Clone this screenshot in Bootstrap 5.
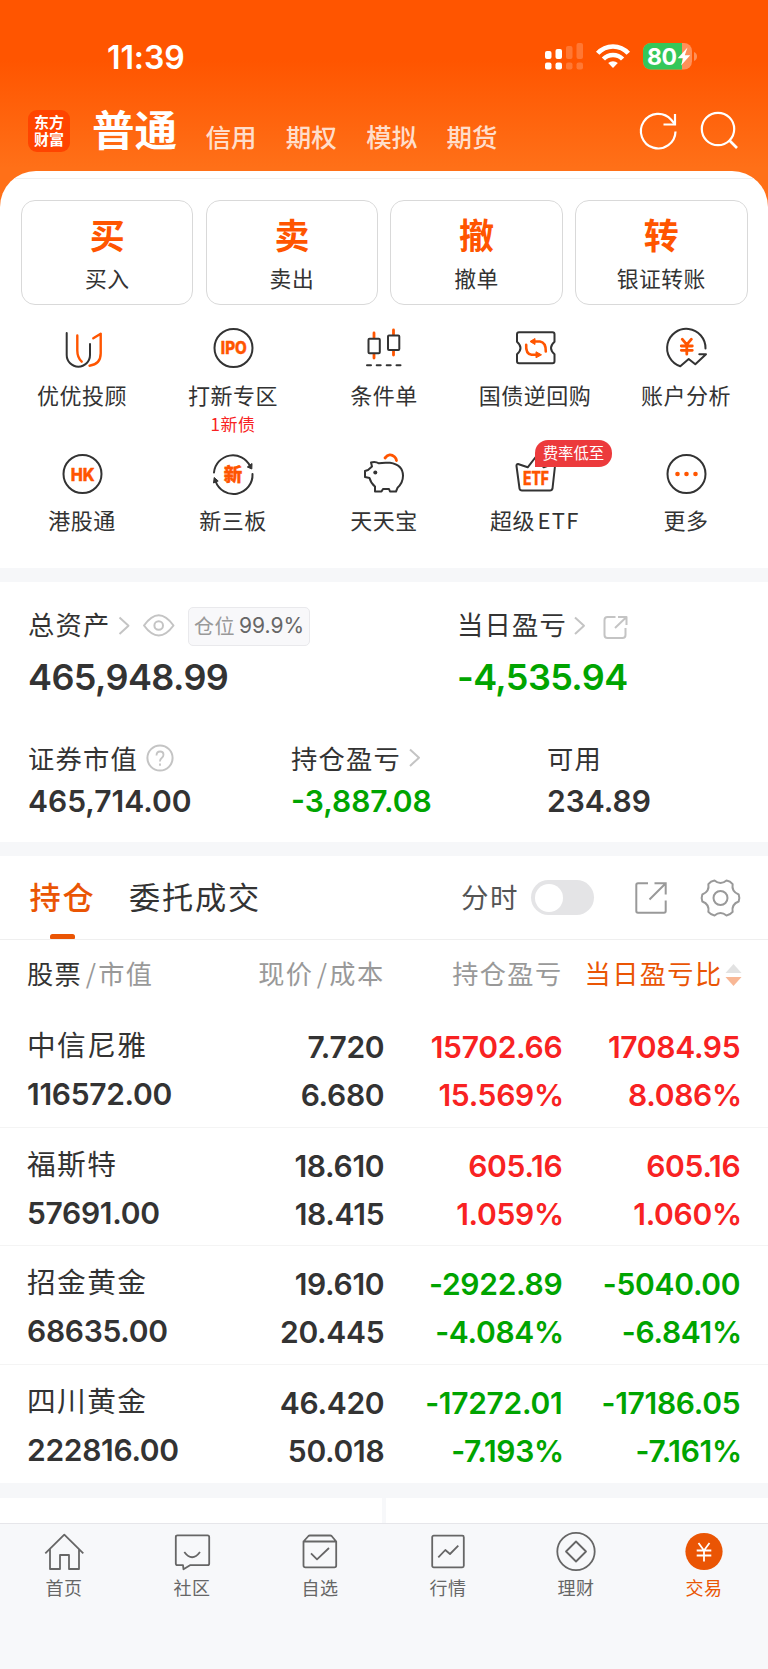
<!DOCTYPE html>
<html lang="zh-CN">
<head>
<meta charset="utf-8">
<meta name="viewport" content="width=device-width, initial-scale=1">
<title>交易</title>
<link href="https://cdn.jsdelivr.net/npm/bootstrap@5.3.0/dist/css/bootstrap.min.css" rel="stylesheet">
<style>
  :root { --ink:#333; --orange:#ff5500; --deep:#ea5504; --up:#f82222; --down:#00a400; --band:#f6f7f9; }
  body { font-family:"Noto Sans CJK SC",sans-serif; color:var(--ink); background:#f7f8fa; letter-spacing:.5px; }
  svg { display:block; overflow:visible; flex:none; }
  .num { font-family:Inter,"Noto Sans CJK SC",sans-serif; font-weight:600; letter-spacing:0; }
  .top-bg { background:linear-gradient(#ff5500 0,#ff5500 60px,#ff7018 168px,#ff7018 215px,#fff 215px); }
  .status { height:78px; padding:38px 71px 0 107px; color:#fff; }
  .clock { font-size:32px; line-height:40px; letter-spacing:-.1px; }
  .app-head { height:93px; padding:20px 29px 7px 28px; color:#fff; }
  .logo { width:42px; height:42px; border-radius:9px; background:#ff4400; font-size:15px; line-height:17px; font-weight:700; letter-spacing:0; padding-top:3px; }
  .title { font-size:42.5px; line-height:60px; font-weight:700; letter-spacing:0; margin-left:22px; padding-bottom:6px; }
  .modes { font-size:25.500px; font-weight:500; letter-spacing:0; color:rgba(255,255,255,.8); gap:29.300px; margin-left:28.500px; padding-top:11px; }
  .sheet { border-radius:36px 36px 0 0; overflow:hidden; }
  .sheet-line { height:8px; border-bottom:1px solid #f0f0f0; }
  .actions { padding:21px 20.5px 0 21px; gap:12.2px; }
  .action { height:104.5px; border:1px solid #d9d9d9; border-radius:14px; padding-top:11px; }
  .action b { font-size:35px; line-height:44px; color:var(--orange); letter-spacing:0; }
  .action span { font-size:21.8px; line-height:30px; margin-top:7px; }
  .tools { padding:0 6.6px; }
  .tool { width:20%; height:125.5px; font-size:22px; line-height:30px; }
  .tool > span { margin-top:10.8px; }
  .tool small { font-size:17px; line-height:20px; margin-top:5px; color:var(--up); }
  .tools.first { padding-top:23.5px; }
  .tools.second .tool { height:114.5px; }
  .latin { letter-spacing:1.3px; margin-left:2.500px; }
  .promo { left:75.5px; top:-14px; height:27px; width:77px; border-radius:13px 13px 13px 0; background:#ec3a3c; color:#fff; font-size:15.4px; line-height:25px; letter-spacing:0; }
  .k { stroke:#333; fill:none; stroke-width:2; stroke-linecap:round; stroke-linejoin:round; }
  .o { stroke:#ff5500; fill:none; stroke-width:2.8; stroke-linecap:round; stroke-linejoin:round; }
  .g { stroke:#666; fill:none; stroke-width:1.8; stroke-linejoin:round; }
  .c { stroke:#c4c4c4; fill:none; stroke-width:2; stroke-linejoin:round; }
  .ot { fill:#ff5500; font-family:Inter,sans-serif; font-weight:800; text-anchor:middle; letter-spacing:0; stroke:#ff5500; stroke-width:.4; stroke-linejoin:round; }
  .band { height:14px; background:var(--band); }
  .assets { height:260px; padding:24px 28px 0; }
  .lbl { font-size:26.3px; letter-spacing:1.2px; line-height:36px; white-space:nowrap; }
  .lift { padding-bottom:5px; height:41px; }
  .n1 { font-size:36px; line-height:44px; margin-top:8.5px; letter-spacing:-.6px; }
  .n2 { font-size:30px; line-height:36px; margin-top:7px; }
  .tag { height:39px; width:122px; border:1.5px solid #e9e9ec; border-radius:5px; background:#f8f8fa; color:#999; font-size:20px; letter-spacing:.5px; margin-left:5.500px; }
  .tag .num { font-weight:400; color:#666; font-size:21px; }
  .sec-tabs { height:84px; border-bottom:1px solid #efefef; padding:0 27px 0 29.500px; }
  .sec-tabs .tab { font-size:31.200px; line-height:80px; padding-bottom:3px; letter-spacing:1.800px; }
  .tab.on { color:var(--deep); font-weight:500; }
  .tab.on::after { content:""; position:absolute; left:20.500px; bottom:0; width:25px; height:5px; border-radius:2.5px 2.5px 1px 1px; background:var(--deep); }
  .split { font-size:27.5px; letter-spacing:1.5px; color:#555; margin-right:12px; padding-bottom:2px; }
  .switch { width:63px; height:35px; border-radius:18px; background:#e4e4e6; padding:3.5px; }
  .switch i { width:28px; height:28px; border-radius:50%; background:#fff; }
  .line { display:grid; grid-template-columns:170px 186px 178px 178px; padding:0 29px 0 27px; }
  .heads { height:69px; font-size:26.200px; letter-spacing:1.400px; color:#999; white-space:nowrap; align-items:center; padding-bottom:2.500px; }
  .heads > div + div { text-align:right; margin-right:-1.500px; }
  .heads em { font-style:normal; margin:0 .8px 0 3.500px; }
  .stock { height:118.6px; padding-top:14.2px; border-bottom:1px solid #f4f4f4; font-size:30px; line-height:48px; }
  .stock .num { letter-spacing:-.3px; }
  .stock .num:not(.val) { text-align:right; margin-right:-1.3px; }
  .pct { margin-right:-1.5px; }
  .stock .nm { font-size:28.700px; letter-spacing:1.400px; line-height:42.500px; margin-bottom:4.300px; }
  .up { color:var(--up); } .down { color:var(--down); }
  .stub { height:25px; }
  .stub div { background:#fff; }
  .dock { height:145.400px; border-top:1.5px solid #e6e6ea; padding-top:6.800px; background:#f7f8fa; font-size:18px; line-height:24px; color:#666; }
  .dock span { margin-top:4px; }
</style>
</head>
<body>
<div class="top-bg">
  <div class="status d-flex justify-content-between">
    <div class="clock num">11:39</div>
    <svg width="153" height="40" viewBox="544 38 153 40">
      <g fill="#fff"><rect x="545" y="51" width="6.5" height="8" rx="2"/><rect x="555.500" y="49" width="6.500" height="10" rx="2"/><rect x="545" y="62.500" width="6.500" height="7" rx="2"/><rect x="555.500" y="62.500" width="6.500" height="7" rx="2"/></g>
      <g fill="#fff" opacity=".2"><rect x="566" y="46" width="6.500" height="13" rx="2"/><rect x="576.500" y="43" width="6.500" height="16" rx="2"/><rect x="566" y="62.500" width="6.500" height="7" rx="2"/><rect x="576.500" y="62.500" width="6.500" height="7" rx="2"/></g>
      <g fill="none" stroke="#fff" stroke-width="4.600"><path d="M597.700 53.300a20.500 20.500 0 0 1 30.600 0"/><path d="M603.400 59a13.500 13.500 0 0 1 19.200 0"/></g>
      <path d="M613 68l-4.800-4.900a7.500 7.500 0 0 1 9.600 0z" fill="#fff"/>
      <rect x="643" y="43" width="49" height="26.500" rx="8" fill="#fff" opacity=".35"/>
      <path d="M682 43h-31a8 8 0 0 0-8 8v10.500a8 8 0 0 0 8 8h31z" fill="#34c759"/>
      <path d="M694 52c4 1 4 8 0 9z" fill="#fff" opacity=".35"/>
      <text x="662" y="65" font-family="Inter,sans-serif" font-weight="700" font-size="23" fill="#fff" text-anchor="middle" letter-spacing="0" textLength="30">80</text>
      <path d="M687.500 47.500l-9.800 10.800h5.500l-2.200 7.200 9.200-10.300h-5.400z" fill="#fff"/>
    </svg>
  </div>
  <header class="app-head d-flex align-items-center">
    <div class="logo text-center">东方<br>财富</div>
    <div class="title">普通</div>
    <nav class="modes d-flex"><span>信用</span><span>期权</span><span>模拟</span><span>期货</span></nav>
    <svg class="ms-auto" width="99" height="40" viewBox="640 111 99 40" fill="none" stroke="#fff" stroke-width="2.200">
      <path d="M675.500 131.500a17.300 17.300 0 1 1-4.300-11.800l4 4.800"/><path d="M675 114v10.500h-11.500"/>
      <circle cx="718" cy="129" r="16.200"/><path d="M729 140l8 8" stroke-width="2.600"/>
    </svg>
  </header>
  <div class="sheet bg-white">
    <div class="sheet-line"></div>
    <div class="actions d-flex">
      <div class="action flex-fill w-100 d-flex flex-column align-items-center"><b>买</b><span>买入</span></div>
      <div class="action flex-fill w-100 d-flex flex-column align-items-center"><b>卖</b><span>卖出</span></div>
      <div class="action flex-fill w-100 d-flex flex-column align-items-center"><b>撤</b><span>撤单</span></div>
      <div class="action flex-fill w-100 d-flex flex-column align-items-center"><b>转</b><span>银证转账</span></div>
    </div>
    <div class="tools first d-flex">
      <div class="tool d-flex flex-column align-items-center">
        <svg width="40" height="40"><path class="k" d="M4.700 5v22a11.600 11.600 0 0 0 23.300 0V16"/><path class="o" style="stroke-width:2.400" d="M15.300 7.500v15q0 7 4.400 11.200M31.300 10.300l7.400-4.600v19.600q0 11-11.200 12.400"/></svg>
        <span>优优投顾</span></div>
      <div class="tool d-flex flex-column align-items-center">
        <svg width="40" height="40"><circle class="k" cx="20.500" cy="20" r="19"/><text class="ot" x="20.800" y="26.200" font-size="17" textLength="26" lengthAdjust="spacingAndGlyphs">IPO</text></svg>
        <span>打新专区</span><small>1新债</small></div>
      <div class="tool d-flex flex-column align-items-center">
        <svg width="40" height="40"><path class="o" d="M10 5v4.500M10 26.500v3.500M29.500 2v4.500M29.500 23v4"/><rect class="k" x="4.500" y="10.700" width="11.300" height="14.500" rx="1"/><rect class="k" x="24" y="7.500" width="11.300" height="14.500" rx="1"/><path class="k" d="M3 37.300h4M12.700 37.300h4M22.700 37.300h4M32.500 37.300h4"/></svg>
        <span>条件单</span></div>
      <div class="tool d-flex flex-column align-items-center">
        <svg width="40" height="40"><path class="k" d="M4 4.300h33.500q2 0 2 2v7.500q-7 6.200 0 12.400v7q0 2-2 2H4q-2 0-2-2v-7q7-6.200 0-12.400V6.300q0-2 2-2z"/><path class="o" style="stroke-width:2.600" d="M18 13.500h7q6 1 5.800 10M24 26.800h-7.500q-6-1-5.300-10"/><path fill="#ff5500" stroke="#ff5500" stroke-linejoin="round" d="M15 13.500l5-3v6zM26.500 26.800l-5.500-3v6z"/></svg>
        <span>国债逆回购</span></div>
      <div class="tool d-flex flex-column align-items-center">
        <svg width="40" height="40"><path class="k" d="M39.500 20.500A19.200 19.200 0 1 0 14.300 38.300l8.400-7.300 6.600 5.300 10.700-10h-6.700"/><path class="o" d="M16.200 11.200l4.600 5.500 4.600-5.500M15.300 18h11M15.300 22.300h11M20.800 17v9.200"/></svg>
        <span>账户分析</span></div>
    </div>
    <div class="tools second d-flex">
      <div class="tool d-flex flex-column align-items-center">
        <svg width="40" height="40"><circle class="k" cx="20.500" cy="20" r="19"/><text class="ot" x="20.700" y="26.500" font-size="18" textLength="24" lengthAdjust="spacingAndGlyphs">HK</text></svg>
        <span>港股通</span></div>
      <div class="tool d-flex flex-column align-items-center">
        <svg width="40" height="40"><path class="k" d="M1 18.500A19 19 0 0 1 37 12M39.500 20A19 19 0 0 1 2.500 27"/><path fill="#333" stroke="#333" stroke-linejoin="round" d="M39 9.500l-.2 5.500-4.500-2zM.500 29l.7-5.500 4 3.500z"/><text class="ot" x="20" y="26.800" font-size="18.500" style="font-family:'Noto Sans CJK SC',sans-serif">新</text></svg>
        <span>新三板</span></div>
      <div class="tool d-flex flex-column align-items-center">
        <svg width="40" height="40"><path class="k" d="M7 8.500q4-1.500 8 .8 4-1 11-.5 13 2 13 13 0 7-5.500 12l-1.500 3.700h-6l-1-2.500h-6l-1.500 2.500h-6.500v-5q-4-3-5.500-8.500L1 23v-6l3-1 4-3.500z"/><path class="o" d="M21 4q4.500-5.500 9.500-1.200 1.600 1.500 2 3.700"/><circle cx="11.300" cy="18.500" r="2" fill="#333"/></svg>
        <span>天天宝</span></div>
      <div class="tool position-relative d-flex flex-column align-items-center">
        <svg width="40" height="40"><path class="k" d="M3 10l9.700 3.300 8-10.300 8 10.300L38 10q2 0 2 2l-2.500 22.500q-.5 2-2.500 2H7q-2 0-2.500-2L1.500 12q-.2-2 1.500-2z"/><text class="ot" x="21" y="30.500" font-size="18.500" textLength="26" lengthAdjust="spacingAndGlyphs">ETF</text></svg>
        <span>超级<span class="latin">ETF</span></span><div class="promo position-absolute text-center">费率低至</div></div>
      <div class="tool d-flex flex-column align-items-center">
        <svg width="40" height="40"><circle class="k" cx="20.500" cy="20" r="19"/><g fill="#ff5500"><circle cx="11.500" cy="20" r="2.300"/><circle cx="20.500" cy="20" r="2.300"/><circle cx="29.500" cy="20" r="2.300"/></g></svg>
        <span>更多</span></div>
    </div>
  </div>
</div>
<div class="band"></div>
<section class="assets bg-white">
  <div class="d-flex">
    <div style="width:429px">
      <div class="d-flex align-items-center" style="height:40px"><span class="lbl lift">总资产</span>
        <svg width="72" height="24" viewBox="111 614 72 24"><path class="c" d="M119.500 617.500l9 8.200-9 8.200"/><path class="c" d="M144 625.500q14.700-20.500 29.500 0-14.800 20-29.500 0z"/><circle class="c" cx="158.700" cy="625.500" r="4.300"/></svg>
        <div class="tag d-flex align-items-center justify-content-center">仓位<span class="num ms-1">99.9%</span></div></div>
      <div class="num n1">465,948.99</div>
    </div>
    <div>
      <div class="d-flex align-items-center" style="height:40px"><span class="lbl lift">当日盈亏</span>
        <svg width="64" height="28" viewBox="567.500 612 64 28"><path class="c" d="M575.500 617.500l9 8.200-9 8.200"/><path class="c" d="M616 617h-8q-3 0-3 3v15q0 3 3 3h15q3 0 3-3v-7M618.500 617H627v8M627 617l-11.500 11"/></svg></div>
      <div class="num n1 down">-4,535.94</div>
    </div>
  </div>
  <div class="d-flex" style="margin-top:41.300px">
    <div style="width:263px"><div class="lbl d-flex align-items-center">证券市值
      <svg width="36" height="28" viewBox="138 745 36 28"><circle class="c" cx="160" cy="759" r="12.600"/><path class="c" style="stroke-width:1.800" d="M156.500 756.500q0-4 3.600-4 3.400 0 3.400 3.300 0 1.800-1.800 3.200t-1.700 3.500M160 764.500v2.200"/></svg></div>
      <div class="num n2">465,714.00</div></div>
    <div style="width:256px"><div class="lbl d-flex align-items-center">持仓盈亏
      <svg width="24" height="20" viewBox="401 749 24 20"><path class="c" d="M410 750.500l9 8.200-9 8.200"/></svg></div>
      <div class="num n2 down">-3,887.08</div></div>
    <div><div class="lbl">可用</div><div class="num n2">234.89</div></div>
  </div>
</section>
<div class="band"></div>
<section class="bg-white">
  <div class="sec-tabs d-flex align-items-center">
    <div class="tab on position-relative">持仓</div>
    <div class="tab" style="margin-left:33.500px">委托成交</div>
    <div class="ms-auto split">分时</div>
    <div class="switch"><i class="d-block"></i></div>
    <svg width="106" height="40" viewBox="635 878 106 40" style="margin-left:41px" fill="none" stroke="#999" stroke-width="2">
      <path d="M648 883.300h-10q-1.700 0-1.700 1.700v26q0 1.700 1.700 1.700h26q1.700 0 1.700-1.700v-10.500M654.500 883.300h11.200v11.200M665.500 883.500l-16 16"/>
      <g transform="translate(720.500 898)" stroke-linejoin="round"><circle r="7"/><path d="M18.160-3.530Q19.500 0 18.160 3.530 10.830 6.250 12.140 13.960 9.700 16.900 6.020 17.490 0 12.500-6.020 17.490-9.700 16.900-12.140 13.960-10.830 6.250-18.160 3.530-19.500 0-18.160-3.530-10.830-6.250-12.140-13.960-9.700-16.900-6.020-17.490 0-12.500 6.020-17.490 9.700-16.900 12.140-13.960 10.830-6.250 18.160-3.530z"/></g>
    </svg>
  </div>
  <div class="line heads">
    <div><span style="color:#333">股票</span><em>/</em>市值</div><div>现价<em>/</em>成本</div><div>持仓盈亏</div>
    <div class="d-flex justify-content-end align-items-center" style="color:var(--deep)">当日盈亏比<svg class="mt-1" width="18" height="24" viewBox="720.500 963 18 24"><path d="M731 964l8 9h-16z" fill="#e2e2e2"/><path d="M731 986l8-9h-16z" fill="#f8b795"/></svg></div>
  </div>
  <div class="line stock"><div><div class="nm">中信尼雅</div><div class="num val">116572.00</div></div><div class="num">7.720<br>6.680</div><div class="num up">15702.66<br><span class="pct">15.569%</span></div><div class="num up">17084.95<br><span class="pct">8.086%</span></div></div>
  <div class="line stock"><div><div class="nm">福斯特</div><div class="num val">57691.00</div></div><div class="num">18.610<br>18.415</div><div class="num up">605.16<br><span class="pct">1.059%</span></div><div class="num up">605.16<br><span class="pct">1.060%</span></div></div>
  <div class="line stock"><div><div class="nm">招金黄金</div><div class="num val">68635.00</div></div><div class="num">19.610<br>20.445</div><div class="num down">-2922.89<br><span class="pct">-4.084%</span></div><div class="num down">-5040.00<br><span class="pct">-6.841%</span></div></div>
  <div class="line stock border-0"><div><div class="nm">四川黄金</div><div class="num val">222816.00</div></div><div class="num">46.420<br>50.018</div><div class="num down">-17272.01<br><span class="pct">-7.193%</span></div><div class="num down">-17186.05<br><span class="pct">-7.161%</span></div></div>
</section>
<div class="band" style="height:14.600px"></div>
<div class="stub d-flex gap-1"><div class="flex-fill"></div><div class="flex-fill"></div></div>
<nav class="dock d-flex text-center">
  <div class="col d-flex flex-column align-items-center"><svg width="40" height="40"><path class="g" d="M1.300 22.300l19-18.600 19 18.600M6 18.300V38h10V24h9v14h10V18.300"/></svg><span>首页</span></div>
  <div class="col d-flex flex-column align-items-center"><svg width="40" height="40"><path class="g" d="M5.500 4.300h30q1.700 0 1.700 1.700v26.500q0 1.700-1.700 1.700H18L11.500 38.300 11 34.200H5.500q-1.700 0-1.700-1.700V6q0-1.700 1.700-1.700zM12.300 21q7.800 10.500 15.700 0"/></svg><span>社区</span></div>
  <div class="col d-flex flex-column align-items-center"><svg width="40" height="40"><path class="g" d="M3.500 10.500h32.700V34.500q0 1.800-1.800 1.800h-29q-1.900 0-1.900-1.800zl5-5.500q.5-.500 1.300-.500h20.500q.8 0 1.300.5l4.600 5.500M11 22.300l6 6 12-11.300"/></svg><span>自选</span></div>
  <div class="col d-flex flex-column align-items-center"><svg width="40" height="40"><rect class="g" x="4.200" y="4.700" width="31.600" height="31.600" rx="1.500"/><path class="g" d="M10.300 26.300l7-7.300 4.700 4 8.300-8.300"/></svg><span>行情</span></div>
  <div class="col d-flex flex-column align-items-center"><svg width="40" height="40"><circle class="g" cx="20" cy="20.500" r="18.700"/><path class="g" d="M20 10.500l10 10-10 10-10-10z"/></svg><span>理财</span></div>
  <div class="col d-flex flex-column align-items-center" style="color:var(--deep)"><svg width="40" height="40"><circle cx="20" cy="20.500" r="18.600" fill="#ea5504"/><path d="M14.500 12l5.500 7.500 5.500-7.500M12.700 19.500h14.600M12.700 24.500h14.600M20 19v11.500" fill="none" stroke="#fff" stroke-width="1.800"/></svg><span>交易</span></div>
</nav>
<script src="https://cdn.jsdelivr.net/npm/bootstrap@5.3.0/dist/js/bootstrap.bundle.min.js"></script>
</body>
</html>
